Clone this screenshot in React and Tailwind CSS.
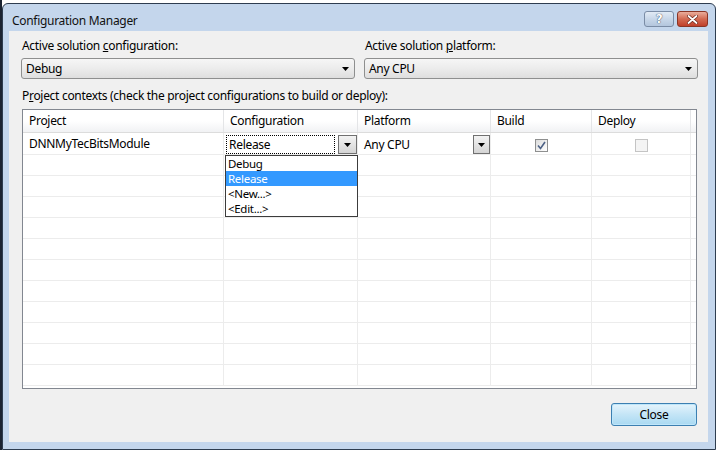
import React from 'react'

function Arrow() {
  return (
    <svg width="7" height="4" viewBox="0 0 7 4">
      <path d="M0 0H7L3.5 4Z" fill="#000" />
    </svg>
  )
}

function Combo({ value }) {
  return (
    <div className="h-[21px] w-[334px] rounded-[3px] border border-[#8e8f8f] bg-gradient-to-b from-[#f6f6f6] via-[#ececec] to-[#dedede] flex items-center pl-[4px] pr-[5px]">
      <span className="flex-1 leading-[16px]">{value}</span>
      <Arrow />
    </div>
  )
}

function DropButton({ w }) {
  return (
    <div className={`${w} h-[19px] border border-[#707070] bg-gradient-to-b from-[#f3f3f3] to-[#d4d4d4] flex items-center justify-center`}>
      <Arrow />
    </div>
  )
}

function CheckBox({ checked, disabled }) {
  return (
    <div className={`w-[13px] h-[13px] border ${disabled ? 'border-[#c4c4c4] bg-[#f4f4f4]' : 'border-[#8e8f8f] bg-gradient-to-br from-[#dcdcdc] to-white'} flex items-center justify-center`}>
      {checked && (
        <svg width="9" height="9" viewBox="0 0 9 9">
          <path d="M1 4.5L3.5 7.5L8 1" fill="none" stroke="#4d6185" strokeWidth="1.6" />
        </svg>
      )}
    </div>
  )
}

const cols = ['w-[201px]', 'w-[134px]', 'w-[133px]', 'w-[101px]', 'w-[99px]']
const headers = ['Project', 'Configuration', 'Platform', 'Build', 'Deploy']

export default function App() {
  const emptyRows = Array.from({ length: 11 })
  return (
    <div className="w-[716px] h-[450px] bg-white border-l-2 border-[#1c2432] pt-[3px] overflow-hidden font-['Noto_Sans',sans-serif] text-[12px] tracking-[-0.3px] text-black">
      <div className="w-[714px] h-[447px] rounded-t-[6px] border border-[#2e3d50] bg-[#c4d6ec] flex flex-col">
        {/* title bar */}
        <div className="h-[27px] flex items-start pl-[9px] pr-[7px]">
          <span className="mt-[9px] leading-[16px] text-[#111]">Configuration Manager</span>
          <div className="ml-auto mt-[7px] flex gap-[3px]">
            <div className="w-[30px] h-[16px] rounded-[3px] border border-[#7a8ca5] bg-gradient-to-b from-[#e2ebf5] via-[#c8d7e9] to-[#b3c6dd] flex items-center justify-center">
              <span className="font-['DejaVu_Sans',sans-serif] font-bold text-[12px] leading-[12px] text-white [text-shadow:0_0_1px_#3a4a60,0_0_1px_#3a4a60]">?</span>
            </div>
            <div className="w-[31px] h-[16px] rounded-[3px] border border-[#8a3525] bg-gradient-to-b from-[#e9ad9c] via-[#d26a52] to-[#c03f29] flex items-center justify-center">
              <svg width="11" height="9" viewBox="0 0 11 9">
                <path d="M1.5 1L9.5 8M9.5 1L1.5 8" stroke="#6b2418" strokeWidth="3.2" strokeLinecap="round" />
                <path d="M1.5 1L9.5 8M9.5 1L1.5 8" stroke="#fff" strokeWidth="1.8" strokeLinecap="round" />
              </svg>
            </div>
          </div>
        </div>

        {/* client area */}
        <div className="mx-[6px] w-[699px] h-[411px] bg-[#f0f0f0] pl-[12px] pt-[7px]">
          <div className="flex gap-[9px]">
            <div>
              <div className="h-[16px] leading-[16px] pl-[1px]">Active solution <u>c</u>onfiguration:</div>
              <div className="mt-[4px]"><Combo value="Debug" /></div>
            </div>
            <div>
              <div className="h-[16px] leading-[16px] pl-[1px]">Active solution <u>p</u>latform:</div>
              <div className="mt-[4px]"><Combo value="Any CPU" /></div>
            </div>
          </div>

          <div className="mt-[9px] h-[16px] leading-[16px] pl-[1px]">P<u>r</u>oject contexts (check the project configurations to build or deploy):</div>

          <div className="relative ml-[1px] mt-[5px] w-[675px] h-[280px] border border-[#828790] bg-white">
            <div className="flex h-[23px] border-b border-[#dcdcdc] bg-gradient-to-b from-white via-white to-[#f1f2f4]">
              {headers.map((h, i) => (
                <div key={h} className={`${cols[i]} border-r border-[#e4e5e7] pl-[6px] pt-[3px] leading-[16px]`}>{h}</div>
              ))}
            </div>

            {/* first row */}
            <div className="flex h-[22px] border-b border-[#ececec]">
              <div className={`${cols[0]} border-r border-[#ececec] pl-[6px] flex items-center leading-[16px] pt-[1px]`}>DNNMyTecBitsModule</div>
              <div className={`${cols[1]} border-r border-[#ececec] flex pt-[2px] pl-[2px]`}>
                <div className="w-[109px] h-[19px] border border-dotted border-black pl-[2px] leading-[17px]">Release</div>
                <div className="ml-[3px]"><DropButton w="w-[19px]" /></div>
              </div>
              <div className={`${cols[2]} border-r border-[#ececec] flex items-start pt-[2px] pl-[6px]`}>
                <span className="flex-1 leading-[19px]">Any CPU</span>
                <DropButton w="w-[17px]" />
              </div>
              <div className={`${cols[3]} border-r border-[#ececec] flex justify-center pt-[6px]`}>
                <CheckBox checked />
              </div>
              <div className={`${cols[4]} border-r border-[#ececec] flex justify-center pt-[6px]`}>
                <CheckBox disabled />
              </div>
            </div>

            {emptyRows.map((_, r) => (
              <div key={r} className="flex h-[21px] border-b border-[#ececec]">
                {cols.map((c, i) => (
                  <div key={i} className={`${c} border-r border-[#ececec]`} />
                ))}
              </div>
            ))}

            {/* open dropdown list */}
            <div className="absolute left-[202px] top-[45px] w-[133px] h-[62px] border border-[#3c3c3c] bg-white text-[11.5px]">
              {['Debug', 'Release', '<New...>', '<Edit...>'].map((t) => (
                <div key={t} className={`h-[15px] leading-[15px] pl-[2px] ${t === 'Release' ? 'bg-[#3399ff] text-white' : ''}`}>{t}</div>
              ))}
            </div>
          </div>

          <div className="mt-[14px] w-[676px] flex justify-end">
            <div className="w-[86px] h-[23px] rounded-[3px] border border-[#3c7fb1] bg-gradient-to-b from-[#e5f4fc] via-[#c4e5f6] to-[#a9d9f2] shadow-[inset_0_0_0_1px_#bfe6fa] flex items-center justify-center leading-[16px]">
              Close
            </div>
          </div>
        </div>
      </div>
    </div>
  )
}
